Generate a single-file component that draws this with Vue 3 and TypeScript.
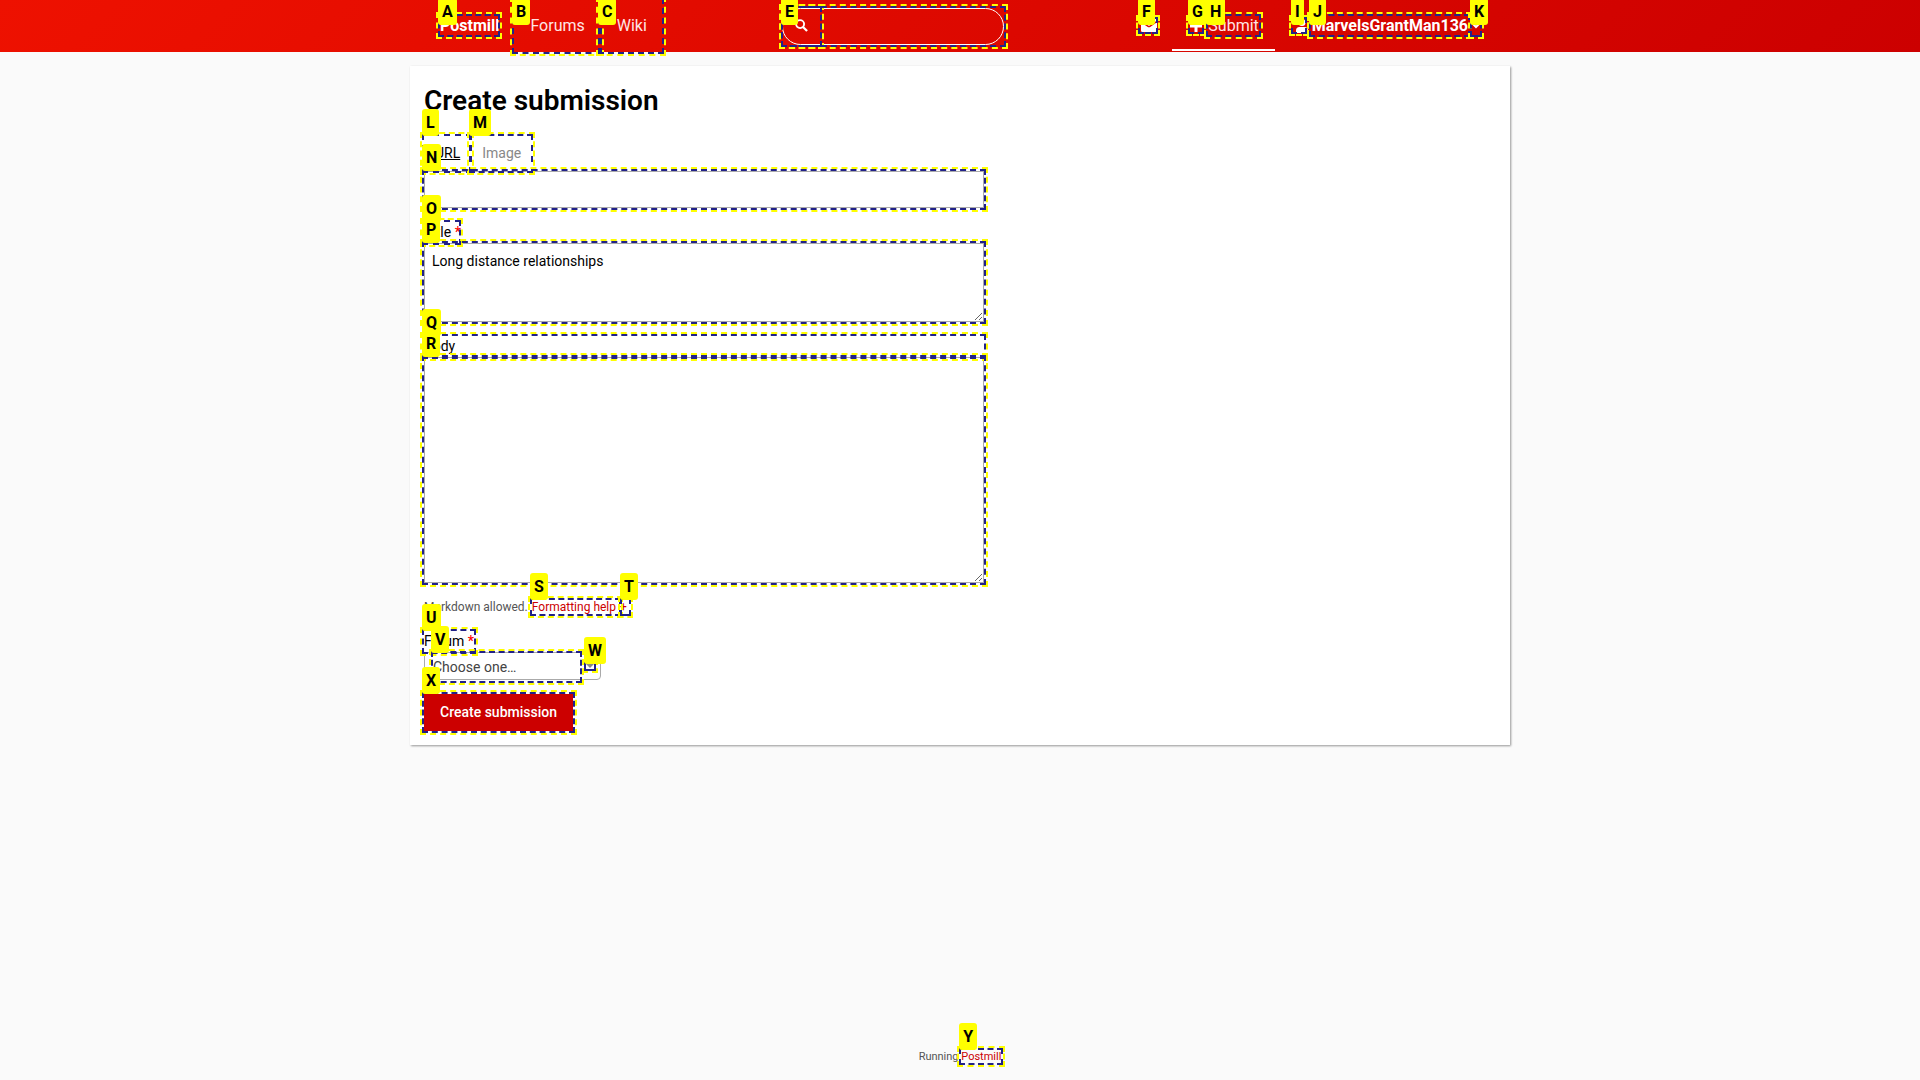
<script setup lang="ts">
import { ref } from 'vue'

interface Mark {
  key: string
  x: number
  y: number
  w: number
  h: number
}

// Hint boxes, measured from the top left corner of the centred page column.
const marks: Mark[] = [
  { key: 'A', x: 28, y: 14, w: 62, h: 23 },
  { key: 'B', x: 102, y: -2, w: 90, h: 56 },
  { key: 'C', x: 188, y: -2, w: 66, h: 56 },
  { key: 'D', x: 371, y: 6, w: 41, h: 41 },
  { key: 'E', x: 371, y: 6, w: 225, h: 41 },
  { key: 'F', x: 728, y: 17, w: 20, h: 17 },
  { key: 'G', x: 778, y: 17, w: 16, h: 17 },
  { key: 'H', x: 796, y: 14, w: 55, h: 23 },
  { key: 'I', x: 881, y: 17, w: 16, h: 17 },
  { key: 'J', x: 899, y: 14, w: 161, h: 23 },
  { key: 'K', x: 1060, y: 14, w: 12, h: 23 },
  { key: 'L', x: 12, y: 134, w: 50, h: 39 },
  { key: 'M', x: 59, y: 134, w: 64, h: 39 },
  { key: 'N', x: 12, y: 169, w: 564, h: 41 },
  { key: 'O', x: 12, y: 220, w: 39, h: 25 },
  { key: 'P', x: 12, y: 241, w: 564, h: 83 },
  { key: 'Q', x: 12, y: 334, w: 564, h: 25 },
  { key: 'R', x: 12, y: 355, w: 564, h: 230 },
  { key: 'S', x: 120, y: 598, w: 91, h: 18 },
  { key: 'T', x: 210, y: 598, w: 11, h: 18 },
  { key: 'U', x: 12, y: 629, w: 54, h: 25 },
  { key: 'V', x: 21, y: 651, w: 151, h: 32 },
  { key: 'W', x: 174, y: 662, w: 12, h: 9 },
  { key: 'X', x: 12, y: 692, w: 153, h: 41 },
]

const title = ref('Long distance relationships')

const boxStyle = (m: Mark) => ({
  left: `${m.x}px`,
  top: `${m.y}px`,
  width: `${m.w}px`,
  height: `${m.h}px`,
})

const tagStyle = (m: Mark) => ({
  left: `${m.x}px`,
  top: `${Math.max(m.y - 25, -2)}px`,
})
</script>

<template>
  <div class="page">
    <header class="bar">
      <div class="bar-inner">
        <nav class="side">
          <a href="#" class="brand">Postmill</a>
          <a href="#" class="nav-link">Forums</a>
          <a href="#" class="nav-link">Wiki</a>
        </nav>
        <form class="search" role="search">
          <button type="button" class="search-btn" aria-label="Search">
            <svg width="13" height="13" viewBox="0 0 14 14" fill="none" stroke="#fff" stroke-width="2">
              <circle cx="5.5" cy="5.5" r="4.3" />
              <path d="M8.6 8.6 13 13" stroke-width="2.4" />
            </svg>
          </button>
          <input type="search" class="search-input" aria-label="Search query" />
        </form>
        <nav class="side right">
          <a href="#" class="mail" aria-label="Messages">
            <svg width="16" height="13" viewBox="0 0 16 13">
              <path fill="#fff" d="M1.5 0h13A1.5 1.5 0 0 1 16 1.500L8.800 6.600a1.500 1.500 0 0 1-1.600 0L0 1.500A1.500 1.500 0 0 1 1.500 0zM0 3.200l6.800 4.700a2 2 0 0 0 2.400 0L16 3.200v8.300a1.500 1.500 0 0 1-1.500 1.500h-13A1.500 1.500 0 0 1 0 11.500z" />
            </svg>
          </a>
          <a href="#" class="submit">
            <svg width="12" height="12" viewBox="0 0 12 12"><path fill="#fff" d="M4.500 0h3v4.500H12v3H7.500V12h-3V7.500H0v-3h4.500z" /></svg>
            <span>Submit</span>
          </a>
          <button type="button" class="user">
            <svg width="12" height="14" viewBox="0 0 12 14">
              <circle cx="6" cy="3.500" r="3.500" fill="#fff" />
              <path fill="#fff" d="M0 11.500a3.500 3.500 0 0 1 3.500-3.500h5a3.500 3.500 0 0 1 3.500 3.500v1.300a1.200 1.200 0 0 1-1.200 1.200H1.200A1.200 1.200 0 0 1 0 12.800z" />
            </svg>
            <strong>MarvelsGrantMan136</strong>
            <svg width="8" height="6" viewBox="0 0 8 6"><path d="M1 1l3 3 3-3" fill="none" stroke="#fff" stroke-width="2" /></svg>
          </button>
        </nav>
      </div>
    </header>

    <main class="card">
      <h1>Create submission</h1>
      <form class="form">
        <nav class="tabs">
          <a href="#" class="tab active">URL</a>
          <a href="#" class="tab">Image</a>
        </nav>
        <input id="url" type="url" class="field url" aria-label="URL" />

        <label for="title" class="label">Title <span class="req">*</span></label>
        <textarea id="title" v-model="title" class="field title"></textarea>

        <label for="body" class="label">Body</label>
        <textarea id="body" class="field body"></textarea>
        <p class="help">
          <span>Markdown allowed.</span>
          <a href="#">Formatting help</a>
          <a href="#">+</a>
        </p>

        <label for="forum" class="label">Forum <span class="req">*</span></label>
        <div class="select-wrap">
          <select id="forum" class="select">
            <option>Choose one…</option>
          </select>
          <svg class="arrow" width="8" height="4" viewBox="0 0 8 4"><path d="M0 0h8L4 4z" fill="#888" /></svg>
        </div>
        <button type="button" class="create">Create submission</button>
      </form>
    </main>

    <footer class="footer">
      Running
      <span class="foot-link">
        <a href="#">Postmill</a>
        <span class="box foot-box"></span>
        <span class="tag foot-tag">Y</span>
      </span>
    </footer>

    <div class="marks">
      <div
        v-for="m in marks"
        :key="'box' + m.key"
        class="box"
        :class="{ tight: m.h < 12 }"
        :style="boxStyle(m)"
      ></div>
      <span v-for="m in marks.filter((k) => k.key !== 'D')" :key="m.key" class="tag" :style="tagStyle(m)">{{ m.key }}</span>
    </div>
  </div>
</template>

<style>
body {
  margin: 0;
  background: #fafafa;
}
</style>

<style scoped>
.page {
  position: relative;
  display: flex;
  flex-direction: column;
  min-height: 100vh;
  overflow: hidden;
  font: 14px/21px Roboto, sans-serif;
  color: #000;
}
a {
  color: #c00;
  text-decoration: none;
}
button,
input,
textarea,
select {
  box-sizing: border-box;
  margin: 0;
  font: inherit;
  color: inherit;
}
.bar {
  background: linear-gradient(135deg, #e10, #c00);
  color: #fff;
  font-size: 16px;
}
.bar-inner {
  display: grid;
  grid-template-columns: 372px 222px 1fr;
  align-items: center;
  max-width: 1100px;
  height: 51px;
  margin: 0 auto;
  padding-bottom: 1px;
}
.bar a {
  color: #fff;
}
.side {
  display: flex;
  align-items: center;
  height: 100%;
}
.brand {
  padding: 0 15px 0 30px;
  font-weight: 700;
}
.nav-link {
  padding: 0 16px;
}
.bar .nav-link,
.bar .submit {
  color: #ffe5e5;
}
.search {
  display: flex;
  box-sizing: border-box;
  height: 37px;
  margin-top: 1px;
  border: 1px solid #fff;
  border-radius: 19px;
}
.search-btn {
  width: 37px;
  padding: 0 1px 2px 0;
  border: 0;
  background: none;
  line-height: 0;
}
.search-input {
  flex: 1;
  min-width: 0;
  border: 0;
  background: none;
  outline: none;
}
.right {
  justify-content: flex-end;
}
.mail {
  display: flex;
  margin-right: 15px;
}
.submit {
  display: flex;
  align-items: center;
  gap: 6px;
  box-sizing: border-box;
  height: 51px;
  padding: 2px 16px 0 18px;
  border-bottom: 2px solid #fff;
}
.user {
  display: flex;
  align-items: center;
  gap: 4px;
  padding: 0 30px 0 21px;
  border: 0;
  background: none;
}
.card {
  box-sizing: border-box;
  width: 100%;
  max-width: 1100px;
  margin: 14px auto 0;
  padding: 14px;
  background: #fff;
  box-shadow: 1px 1px 2px rgba(0, 0, 0, 0.4);
}
h1 {
  margin: 0;
  font-size: 28px;
  font-weight: 600;
  line-height: 42px;
}
.form {
  display: flex;
  flex-direction: column;
  align-items: flex-start;
  width: 560px;
  max-width: 100%;
}
.tabs {
  display: flex;
  margin-top: 12px;
}
.tab {
  padding: 9px 11px 7px;
  line-height: 21px;
  color: #888;
}
.tab.active {
  color: #000;
  text-decoration: underline;
}
.field {
  display: block;
  width: 100%;
  padding: 7px;
  border: 1px solid #aaa;
  background: #fff;
  resize: vertical;
}
.url {
  height: 37px;
}
.title {
  height: 79px;
}
.body {
  height: 226px;
}
.label {
  margin-top: 14px;
}
.req {
  color: #f00;
  font-weight: 500;
}
.help {
  display: flex;
  gap: 4px;
  margin: 14px 0 0;
  font-size: 12px;
  line-height: 20px;
  color: #555;
}
.select-wrap {
  position: relative;
  width: 177px;
}
.select {
  display: block;
  width: 100%;
  height: 28px;
  padding: 2px 8px 0;
  border: 1px solid #aaa;
  border-radius: 4px;
  background: #fff;
  color: #444;
  appearance: none;
}
.arrow {
  position: absolute;
  right: 7px;
  top: 12px;
}
.create {
  height: 37px;
  margin-top: 14px;
  padding: 0 16px;
  border: 0;
  background: #c00;
  color: #fff;
  font-weight: 500;
}
.footer {
  margin-top: auto;
  padding: 14px 14px 15px;
  font-size: 11px;
  line-height: 17px;
  text-align: center;
  color: #555;
}
.foot-link {
  position: relative;
  display: inline-block;
}
.marks {
  position: absolute;
  top: 0;
  left: 50%;
  width: 1100px;
  margin-left: -550px;
  pointer-events: none;
}
.box {
  position: absolute;
  box-sizing: border-box;
  border: 2px dashed #228;
  outline: 2px dashed #ff0;
}
.box.tight {
  border-style: solid;
}
.tag {
  position: absolute;
  padding: 4px;
  border-radius: 3px;
  background: #ff0;
  color: #000;
  font-size: 16px;
  font-weight: 700;
  line-height: 19px;
}
.foot-box {
  inset: 0 -2px;
}
.foot-tag {
  left: -2px;
  top: -25px;
}
</style>
